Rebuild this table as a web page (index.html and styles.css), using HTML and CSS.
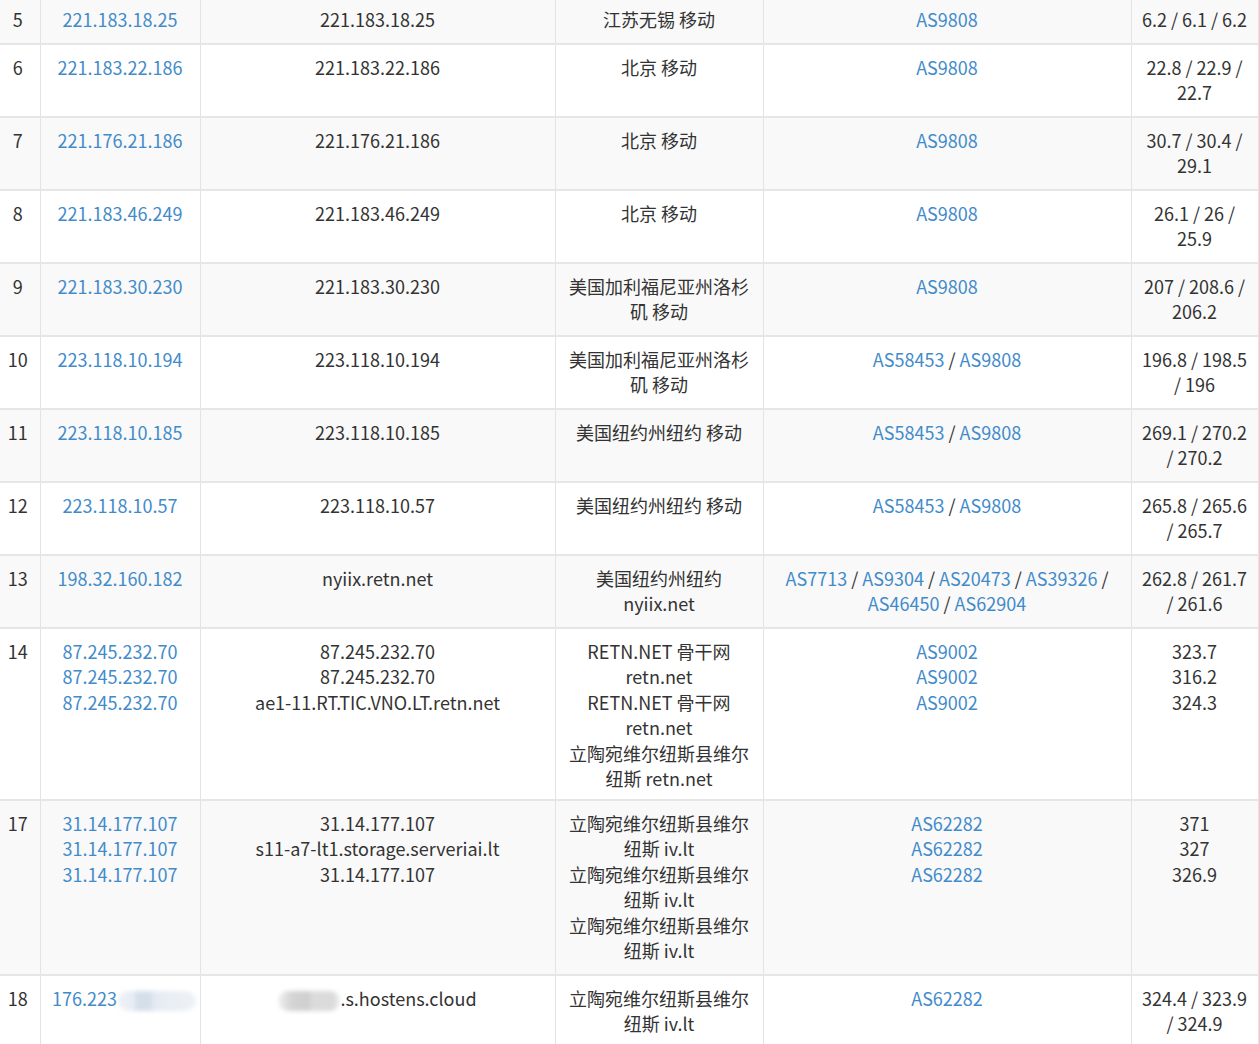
FILE: index.html
```html
<!DOCTYPE html>
<html lang="zh-CN">
<head>
<meta charset="utf-8">
<title>Traceroute</title>
<link rel="stylesheet" href="styles.css">
</head>
<body>
<table class="trace">
  <colgroup>
    <col class="c-no"><col class="c-ip"><col class="c-host"><col class="c-loc"><col class="c-as"><col class="c-ms">
  </colgroup>
  <tbody>
    <tr>
      <td class="no">5</td>
      <td><a>221.183.18.25</a></td>
      <td>221.183.18.25</td>
      <td>江苏无锡 移动</td>
      <td><a>AS9808</a></td>
      <td>6.2 / 6.1 / 6.2</td>
    </tr>
    <tr>
      <td class="no">6</td>
      <td><a>221.183.22.186</a></td>
      <td>221.183.22.186</td>
      <td>北京 移动</td>
      <td><a>AS9808</a></td>
      <td>22.8 / 22.9 / 22.7</td>
    </tr>
    <tr>
      <td class="no">7</td>
      <td><a>221.176.21.186</a></td>
      <td>221.176.21.186</td>
      <td>北京 移动</td>
      <td><a>AS9808</a></td>
      <td>30.7 / 30.4 / 29.1</td>
    </tr>
    <tr>
      <td class="no">8</td>
      <td><a>221.183.46.249</a></td>
      <td>221.183.46.249</td>
      <td>北京 移动</td>
      <td><a>AS9808</a></td>
      <td>26.1 / 26 / 25.9</td>
    </tr>
    <tr>
      <td class="no">9</td>
      <td><a>221.183.30.230</a></td>
      <td>221.183.30.230</td>
      <td>美国加利福尼亚州洛杉矶 移动</td>
      <td><a>AS9808</a></td>
      <td>207 / 208.6 / 206.2</td>
    </tr>
    <tr>
      <td class="no">10</td>
      <td><a>223.118.10.194</a></td>
      <td>223.118.10.194</td>
      <td>美国加利福尼亚州洛杉矶 移动</td>
      <td><a>AS58453</a> / <a>AS9808</a></td>
      <td>196.8 / 198.5 / 196</td>
    </tr>
    <tr>
      <td class="no">11</td>
      <td><a>223.118.10.185</a></td>
      <td>223.118.10.185</td>
      <td>美国纽约州纽约 移动</td>
      <td><a>AS58453</a> / <a>AS9808</a></td>
      <td>269.1 / 270.2 / 270.2</td>
    </tr>
    <tr>
      <td class="no">12</td>
      <td><a>223.118.10.57</a></td>
      <td>223.118.10.57</td>
      <td>美国纽约州纽约 移动</td>
      <td><a>AS58453</a> / <a>AS9808</a></td>
      <td>265.8 / 265.6 / 265.7</td>
    </tr>
    <tr>
      <td class="no">13</td>
      <td><a>198.32.160.182</a></td>
      <td>nyiix.retn.net</td>
      <td>美国纽约州纽约 nyiix.net</td>
      <td><a>AS7713</a> / <a>AS9304</a> / <a>AS20473</a> / <a>AS39326</a> / <a>AS46450</a> / <a>AS62904</a></td>
      <td>262.8 / 261.7 / 261.6</td>
    </tr>
    <tr class="tall">
      <td class="no">14</td>
      <td><a class="line">87.245.232.70</a><a class="line">87.245.232.70</a><a class="line">87.245.232.70</a></td>
      <td><div>87.245.232.70</div><div>87.245.232.70</div><div>ae1-11.RT.TIC.VNO.LT.retn.net</div></td>
      <td><div>RETN.NET 骨干网 retn.net</div><div>RETN.NET 骨干网 retn.net</div><div>立陶宛维尔纽斯县维尔纽斯 retn.net</div></td>
      <td><a class="line">AS9002</a><a class="line">AS9002</a><a class="line">AS9002</a></td>
      <td><div>323.7</div><div>316.2</div><div>324.3</div></td>
    </tr>
    <tr>
      <td class="no">17</td>
      <td><a class="line">31.14.177.107</a><a class="line">31.14.177.107</a><a class="line">31.14.177.107</a></td>
      <td><div>31.14.177.107</div><div>s11-a7-lt1.storage.serveriai.lt</div><div>31.14.177.107</div></td>
      <td><div>立陶宛维尔纽斯县维尔纽斯 iv.lt</div><div>立陶宛维尔纽斯县维尔纽斯 iv.lt</div><div>立陶宛维尔纽斯县维尔纽斯 iv.lt</div></td>
      <td><a class="line">AS62282</a><a class="line">AS62282</a><a class="line">AS62282</a></td>
      <td><div>371</div><div>327</div><div>326.9</div></td>
    </tr>
    <tr>
      <td class="no">18</td>
      <td><a>176.223</a><span class="blur blur-ip"></span></td>
      <td><span class="blur blur-host"></span>.s.hostens.cloud</td>
      <td>立陶宛维尔纽斯县维尔纽斯 iv.lt</td>
      <td><a>AS62282</a></td>
      <td>324.4 / 323.9 / 324.9</td>
    </tr>
  </tbody>
</table>
</body>
</html>
```

FILE: styles.css
```css
html, body {
  margin: 0;
  padding: 0;
  background: #ffffff;
  overflow: hidden;
}

.trace {
  border-collapse: collapse;
  table-layout: fixed;
  width: 1258px;
  margin-top: -5px;
  font-family: "Noto Sans CJK SC", "Noto Sans", sans-serif;
  font-size: 18px;
  line-height: 25.5px;
  color: #333333;
}

.c-no { width: 40px; }
.c-ip { width: 160px; }
.c-host { width: 355px; }
.c-loc { width: 208px; }
.c-as { width: 368px; }
.c-ms { width: 127px; }

.trace td {
  vertical-align: top;
  text-align: center;
  padding: 10px 8px 10px 8px;
  border-left: 1px solid #e3e3e3;
  border-right: 1px solid #e3e3e3;
  border-top: 2px solid #e6e6e6;
  word-wrap: break-word;
}

.trace tr.tall td {
  padding-bottom: 7px;
}

.trace td:first-child {
  border-left: none;
  padding-left: 2px;
  padding-right: 6px;
}

.trace td:nth-child(4) {
  padding-left: 10px;
  padding-right: 10px;
}

.trace tr:nth-child(odd) td {
  background: #f9f9f9;
}

.trace a {
  color: #428bca;
  text-decoration: none;
}

.trace a.line {
  display: block;
}

.blur {
  display: inline-block;
  vertical-align: middle;
  height: 20px;
  border-radius: 10px;
  filter: blur(2px);
}

.blur-ip {
  width: 78px;
  margin-left: 1px;
  margin-right: -8px;
  background: linear-gradient(90deg, #eef2f7 0%, #e8edf4 20%, #d5dfea 24%, #d5dfea 42%, #e6ebf2 46%, #eef2f7 100%);
}

.blur-host {
  width: 62px;
  background: linear-gradient(90deg, #f0f0f0 0%, #d4d4d4 22%, #cfcfcf 50%, #dcdcdc 55%, #dadada 88%, #eeeeee 100%);
}
```
